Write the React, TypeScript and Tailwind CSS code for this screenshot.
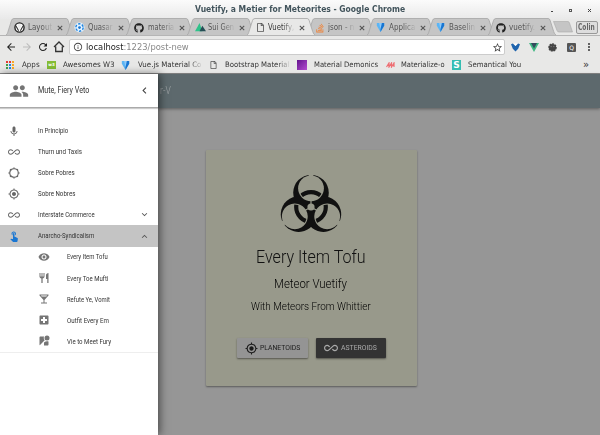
import React, { useLayoutEffect, useRef, useState } from "react";
import { MdPeople, MdChevronLeft, MdKeyboardVoice, MdAllInclusive, MdMyLocation, MdTouchApp, MdVisibility, MdRestaurant, MdLocalBar, MdLocalHospital, MdStreetview, MdExpandMore, MdExpandLess, MdArrowBack, MdArrowForward, MdRefresh, MdInfoOutline, MdStarBorder, MdMoreVert } from "react-icons/md";
import { FaGithub, FaStackOverflow, FaRegFile } from "react-icons/fa";

/* One line of text, condensed or expanded horizontally to a given width. */
function Fit({ w, className = "", children }: { w: number; className?: string; children: React.ReactNode }) {
  const ref = useRef<HTMLSpanElement>(null);
  const [scale, setScale] = useState(1);
  useLayoutEffect(() => {
    if (ref.current) setScale(w / ref.current.offsetWidth);
  }, [w]);
  return (
    <span className={"block shrink-0 whitespace-nowrap " + className} style={{ width: w }}>
      <span ref={ref} className="inline-block origin-left" style={{ transform: `scaleX(${scale})` }}>{children}</span>
    </span>
  );
}

function Biohazard() {
  const turns = [0, 120, 240];
  return (
    <svg viewBox="-32 -34 64 64" className="h-16 w-16">
      <mask id="body" maskUnits="userSpaceOnUse" x="-34" y="-34" width="68" height="68">
        <rect x="-34" y="-34" width="68" height="68" fill="white" />
        {turns.map((t) => (
          <g key={t} transform={`rotate(${t})`}>
            <circle cy="-18.7" r="12.9" fill="black" />
            <rect x="-2.2" y="-34" width="4.4" height="6" fill="black" />
            <rect x="-0.6" y="-8" width="1.2" height="8" fill="black" />
          </g>
        ))}
        <circle r="3.6" fill="black" />
      </mask>
      <clipPath id="lobes">
        {turns.map((t) => <circle key={t} cy="-18.7" r="11.8" transform={`rotate(${t})`} />)}
      </clipPath>
      <g mask="url(#body)" fill="#111">
        {turns.map((t) => <circle key={t} cy="-14.3" r="17.8" transform={`rotate(${t})`} />)}
      </g>
      <circle r="14.8" fill="none" stroke="#111" strokeWidth="4.2" clipPath="url(#lobes)" />
    </svg>
  );
}

/* Scalloped outline ring. */
function SunRing({ className = "" }: { className?: string }) {
  return (
    <svg viewBox="0 0 24 24" className={className}>
      <circle cx="12" cy="12" r="8.5" fill="none" stroke="currentColor" strokeWidth="2.2" />
      {[0, 45, 90, 135, 180, 225, 270, 315].map((a) => (
        <path key={a} d="M9 3L12 .5 15 3z" fill="currentColor" transform={`rotate(${a} 12 12)`} />
      ))}
    </svg>
  );
}

function Vuetify() {
  return (
    <svg viewBox="0 0 12 12" className="h-[11px] w-[11px] shrink-0">
      <path d="M2 1h8v3L6 11 2 4z" fill="#5bb5f5" />
      <path d="M6 1h4v3L6 11z" fill="#1976d2" />
      <path d="M4.500 1h3L6 8z" fill="#90caf9" />
    </svg>
  );
}

function Layout() {
  return (
    <svg viewBox="0 0 12 12" className="h-[11px] w-[11px] shrink-0">
      <circle cx="6" cy="6" r="5" fill="#fff" stroke="#222" strokeWidth="1.5" />
      <path d="M3.500 2.500h5L6 9z" fill="#eee" />
      <path d="M2 4l3 5.500M10 4L7 9.500" fill="none" stroke="#333" strokeWidth="1.200" />
    </svg>
  );
}

function Quasar() {
  return (
    <svg viewBox="0 0 12 12" className="h-[11px] w-[11px] shrink-0">
      <circle cx="6" cy="6" r="5.5" fill="#e5f3ff" />
      <circle cx="6" cy="6" r="4" fill="none" stroke="#2185df" strokeWidth="1.600" strokeDasharray="2.6 1.6" />
      <circle cx="6" cy="6" r="1.5" fill="#1976d2" />
    </svg>
  );
}

function Mountain() {
  return (
    <svg viewBox="0 0 12 12" className="h-[11px] w-[11px] shrink-0">
      <path d="M0 10L5 1l3 9z" fill="#2fc28a" />
      <path d="M5 10l3-6 4 6z" fill="#254e55" />
    </svg>
  );
}

const tabs = [
  { name: "Layout", w: 24, icon: <Layout /> },
  { name: "Quasar", w: 25, icon: <Quasar /> },
  { name: "materia", w: 26, icon: <FaGithub className="h-[10px] w-[10px] shrink-0 text-[#222]" /> },
  { name: "Sui Gen", w: 26, icon: <Mountain /> },
  { name: "Vuetify,", w: 26, icon: <FaRegFile className="ml-[2px] h-[9px] w-[7px] shrink-0 text-[#555]" />, active: true },
  { name: "json - n", w: 26, icon: <FaStackOverflow className="h-[10px] w-[10px] shrink-0 text-[#ef8236]" /> },
  { name: "Applica", w: 26, icon: <Vuetify /> },
  { name: "Baselin", w: 26, icon: <Vuetify /> },
  { name: "vuetify.", w: 26, icon: <FaGithub className="h-[10px] w-[10px] shrink-0 text-[#222]" /> },
];

function Tab({ tab }: { tab: (typeof tabs)[number] }) {
  return (
    <div className={"relative -mr-[8px] h-[17px] w-[68.2px] shrink-0 " + (tab.active ? "z-10" : "")}>
      <svg viewBox="0 0 68 17" preserveAspectRatio="none" className="absolute inset-0 h-full w-full">
        <path d="M0 17C1.500 16 1.500 15 2 13.500L5.500 2.500Q6 .5 8 .5H60Q61.500 .5 62 2.500L65.500 13.500Q66 16 68 17" fill={tab.active ? "#e8e8e7" : "#c5c5c5"} stroke="#a5a5a5" strokeWidth=".8" />
      </svg>
      <div className="relative flex h-full items-center pt-[2px] pl-[8px]">
        <span className="flex w-[13.500px] shrink-0">{tab.icon}</span>
        <Fit w={tab.w} className={"overflow-hidden text-[8px] [mask-image:linear-gradient(90deg,#000_55%,transparent_105%)] " + (tab.active ? "text-[#333]" : "text-[#555]")}>{tab.name}</Fit>
        <svg viewBox="0 0 6 6" className="ml-[5px] h-[6px] w-[6px] shrink-0"><path d="M.8 .8l4.400 4.400M5.200 .8L.8 5.200" stroke="#555" strokeWidth="1.100" /></svg>
      </div>
    </div>
  );
}

function Bookmark({ icon, name, w, className }: { icon: React.ReactNode; name: string; w: number; className: string }) {
  return (
    <div className={"flex shrink-0 items-center " + className}>
      {icon}
      <Fit w={w} className={name.endsWith("Co") || name === "Bootstrap Material" ? "[mask-image:linear-gradient(90deg,#000_82%,transparent_103%)]" : ""}>{name}</Fit>
    </div>
  );
}

function AppsGrid() {
  const colors = ["#e53935", "#e53935", "#f9a825", "#43a047", "#1e88e5", "#f9a825", "#43a047", "#1e88e5", "#f9a825"];
  return (
    <div className="grid grid-cols-3 gap-px">
      {colors.map((c, i) => <i key={i} className="h-[2px] w-[2px]" style={{ backgroundColor: c }} />)}
    </div>
  );
}

function Browser() {
  return (
    <header className="h-[74px] shrink-0 border-b border-[#888] bg-[#e8e8e7] font-['DejaVu_Sans',sans-serif] text-[#333]">
      <div className="flex h-[19px] items-center bg-gradient-to-b from-[#fbfbfb] to-[#e9e9e9] pt-px pl-[195px] text-[#42545c]">
        <Fit w={210} className="text-[8px] font-bold">Vuetify, a Metier for Meteorites - Google Chrome</Fit>
        <div className="ml-auto flex items-center gap-[16px] pr-[9px]">
          <span className="mt-[2px] h-px w-[2px] bg-[#444]" />
          <span className="h-[3px] w-[3px] border border-[#555]" />
          <svg viewBox="0 0 3 3" className="h-[3px] w-[3px]"><path d="M0 0l3 3M3 0L0 3" stroke="#444" /></svg>
        </div>
      </div>
      <div className="flex h-[17px] items-end border-b border-[#b5b5b5] pl-[6px]">
        {tabs.map((t) => <Tab key={t.name} tab={t} />)}
        <svg viewBox="0 0 20 12" className="mb-[2px] ml-[5px] h-3 w-5 shrink-0"><path d="M.5 .5H15Q16 .5 16.500 2L19.500 11H6Q4.500 11 4 9.500z" fill="#c5c5c5" stroke="#aaa" strokeWidth=".6" /></svg>
        <div className="mb-px ml-[3px] flex h-[13px] w-[22px] items-center justify-center rounded-[2px] border border-[#999] bg-[#ddd]"><Fit w={17} className="text-[8px] leading-none font-bold text-[#666]">Colin</Fit></div>
      </div>
      <div className="flex h-[21px] items-center pt-px pl-[5px] text-[#444]">
        <MdArrowBack className="h-3 w-3 text-[#222]" />
        <MdArrowForward className="ml-[4px] h-3 w-3 text-[#bbb]" />
        <MdRefresh className="ml-[4px] h-3 w-3 text-[#222]" />
        <svg viewBox="0 0 12 12" className="ml-[4px] h-3 w-3"><path d="M1 6l5-5 5 5M2.700 5.500v5h6.600v-5" fill="none" stroke="#333" strokeWidth="1.300" /></svg>
        <div className="ml-[4px] flex h-[16px] w-[436px] items-center rounded-[2px] border border-[#ccc] bg-white pl-[3px]">
          <MdInfoOutline className="h-[10px] w-[10px]" />
          <Fit w={103} className="ml-[3px] text-[9px] leading-none text-[#888]"><span className="text-[#222]">localhost</span>:1223/post-new</Fit>
          <MdStarBorder className="ml-auto mr-px h-[11px] w-[11px]" />
        </div>
        <svg viewBox="0 0 10 10" className="ml-[6px] h-[10px] w-[9px]"><path d="M0 2l2-1 3 3 3-3 2 1-2 5-3 3-3-3z" fill="#1d63ad" /><path d="M3 1h4L5 4z" fill="#fff" /></svg>
        <svg viewBox="0 0 10 9" className="ml-[9px] h-[9px] w-[10px]"><path d="M0 0h10L5 9z" fill="#41b883" /><path d="M2 0h6L5 5.500z" fill="#35495e" /></svg>
        <svg viewBox="0 0 10 10" className="ml-[9px] h-[9px] w-[9px]">
          <circle cx="5" cy="5" r="4" fill="#444" stroke="#444" strokeWidth="1.500" strokeDasharray="2 1" />
          <path d="M3 4h1M6 4h1" stroke="#aaa" strokeWidth=".8" />
        </svg>
        <div className="ml-[10px] flex h-[9px] w-[9px] items-center justify-center rounded-[1px] bg-[#555] text-[6px] text-white">Q</div>
        <MdMoreVert className="ml-[7px] h-3 w-3" />
      </div>
      <div className="flex h-[16px] items-center pl-[6px] text-[7.500px] leading-none">
        <Bookmark className="gap-[8px]" icon={<AppsGrid />} name="Apps" w={18} />
        <Bookmark className="ml-[7px] gap-[7px]" icon={<div className="flex h-[8px] w-[9px] items-center justify-center bg-[#84bd35] text-[4px] font-bold text-white">w3</div>} name="Awesomes W3" w={51} />
        <Bookmark className="ml-[6px] gap-[7px]" icon={<Vuetify />} name="Vue.js Material Co" w={63} />
        <Bookmark className="ml-[9px] gap-[8px]" icon={<FaRegFile className="h-2 w-[7px] text-[#555]" />} name="Bootstrap Material" w={64} />
        <Bookmark className="ml-[8px] gap-[7px]" icon={<div className="h-[10px] w-[10px] bg-gradient-to-br from-[#64128e] to-[#b44bd0]" />} name="Material Demonics" w={64} />
        <Bookmark className="ml-[8px] gap-[6px]" icon={<svg viewBox="0 0 9 6" className="h-[6px] w-[9px]"><path d="M.5 5L3 1v4l2.500-4v4L8 1v4" fill="none" stroke="#ee6e73" strokeWidth="1.200" /></svg>} name="Materialize-o" w={44} />
        <Bookmark className="ml-[7px] gap-[7px]" icon={<div className="flex h-[10px] w-[9px] items-center justify-center bg-[#35bdb2] text-[9px] font-bold text-white">S</div>} name="Semantical You" w={53} />
        <span className="ml-auto pr-[11px] text-[10px]">»</span>
      </div>
    </header>
  );
}

const items = [
  { name: "In Principio", w: 30, Icon: MdKeyboardVoice },
  { name: "Thurn und Taxis", w: 44, Icon: MdAllInclusive },
  { name: "Sobre Pobres", w: 37, Icon: SunRing },
  { name: "Sobre Nobres", w: 37, Icon: MdMyLocation },
  { name: "Interstate Commerce", w: 57, Icon: MdAllInclusive, Arrow: MdExpandMore },
  { name: "Anarcho-Syndicalism", w: 56, Icon: MdTouchApp, Arrow: MdExpandLess, active: true },
];

const children = [
  { name: "Every Item Tofu", w: 41, Icon: MdVisibility },
  { name: "Every Toe Mufti", w: 41, Icon: MdRestaurant },
  { name: "Refute Ye, Vomit", w: 43, Icon: MdLocalBar },
  { name: "Outfit Every Em", w: 42, Icon: MdLocalHospital },
  { name: "Vie to Meet Fury", w: 44, Icon: MdStreetview },
];

function Drawer() {
  return (
    <aside className="z-10 w-[158px] shrink-0 bg-white text-[7.500px] text-[#333] shadow-[2px_0_8px_rgba(0,0,0,0.5)]">
      <div className="flex h-[34px] items-center border-b border-[#aaa] pl-[9px] shadow-[0_1px_1px_rgba(0,0,0,0.2)]">
        <MdPeople className="h-[20px] w-[20px] text-[#757575]" />
        <Fit w={51} className="ml-[9px] pt-px text-[9px]">Mute, Fiery Veto</Fit>
        <MdChevronLeft className="ml-auto mr-[7px] h-[13px] w-[13px] text-[#444]" />
      </div>
      <nav className="border-b border-[#eee] pt-[12px]">
        {items.map(({ name, w, Icon, Arrow, active }) => (
          <div key={name} className={"flex h-[21.100px] items-center pl-[8px] " + (active ? "bg-[#c4c4c4]" : "")}>
            <Icon className={"h-[12px] w-[12px] " + (active ? "text-[#1976d2]" : "text-[#666]")} />
            <Fit w={w} className="ml-[18px]">{name}</Fit>
            {Arrow && <Arrow className="ml-auto mr-[8px] h-[11px] w-[11px] text-[#555]" />}
          </div>
        ))}
        {children.map(({ name, w, Icon }) => (
          <div key={name} className="flex h-[21.100px] items-center pl-[38px]">
            <Icon className="h-[12px] w-[12px] text-[#757575]" />
            <Fit w={w} className="ml-[17px]">{name}</Fit>
          </div>
        ))}
      </nav>
    </aside>
  );
}

export default function App() {
  return (
    <div className="flex h-[435px] w-[600px] flex-col overflow-hidden bg-[#969696]">
      <Browser />
      <div className="flex min-h-0 flex-1 font-['Roboto','Liberation_Sans',sans-serif]">
        <Drawer />
        <div className="flex min-w-0 flex-1 flex-col">
          <div className="flex h-[34px] shrink-0 items-center bg-[#5d696d] pl-[2px] text-[#a0a5a7] shadow-[0_1px_3px_rgba(0,0,0,0.4)]">
            <Fit w={11} className="text-[11px] font-light">r-V</Fit>
          </div>
          <main className="mt-[42px] ml-[48px] flex h-[236px] w-[210.500px] flex-col items-center rounded-[1px] bg-[#98998b] pt-[23px] pr-px text-[#1c1c1c] shadow-[0_1px_2px_rgba(0,0,0,0.4)]">
            <Biohazard />
            <Fit w={110} className="mt-[8px] text-[19px] leading-6 font-light text-[#111]">Every Item Tofu</Fit>
            <Fit w={73} className="mt-[5px] text-[13px] leading-5 font-light text-black">Meteor Vuetify</Fit>
            <Fit w={120} className="mt-[5px] text-[10.500px] leading-4 font-light text-black">With Meteors From Whittier</Fit>
            <div className="mt-[23px] flex gap-[8px] pl-px text-[8px]">
              <div className="flex h-[20px] w-[71.500px] items-center rounded-[1px] bg-[#949494] pl-[8px] shadow-[0_1px_2px_rgba(0,0,0,0.45)]">
                <MdMyLocation className="h-[13px] w-[13px]" />
                <Fit w={40} className="ml-[2px]">PLANETOIDS</Fit>
              </div>
              <div className="flex h-[20px] w-[69.500px] items-center rounded-[1px] bg-[#333] pl-[8px] text-[#aaa] shadow-[0_1px_2px_rgba(0,0,0,0.45)]">
                <MdAllInclusive className="h-[14px] w-[14px]" />
                <Fit w={36} className="ml-[3px]">ASTEROIDS</Fit>
              </div>
            </div>
          </main>
        </div>
      </div>
    </div>
  );
}
